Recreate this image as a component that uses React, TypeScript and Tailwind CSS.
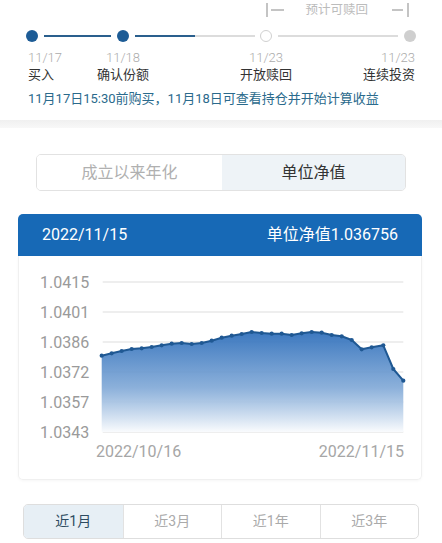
import React from "react";

const pts: [number, number][] = [
  [101.7, 355.7], [111.7, 353.3], [121.7, 351], [131.7, 349], [141.7, 348.3],
  [151.7, 347], [161.7, 345.3], [171.7, 343.7], [181.7, 343], [191.7, 344],
  [201.7, 343], [211.7, 340.7], [221.7, 337.7], [231.7, 335.7], [241.7, 334],
  [251.7, 332], [261.7, 333], [271.7, 333.7], [281.7, 333.7], [291.7, 335],
  [301.7, 333.3], [311.7, 332], [321.7, 332.7], [331.7, 335], [341.7, 336.3],
  [351.7, 340], [361.7, 349.3], [371.7, 347.3], [383.3, 345.3], [393.3, 369],
  [403.3, 380.7],
];

const yLabels = ["1.0415", "1.0401", "1.0386", "1.0372", "1.0357", "1.0343"];

function Chart() {
  const line = pts.map((p, i) => `${i === 0 ? "M" : "L"}${p[0]},${p[1]}`).join(" ");
  const area = `${line} L403.3,432 L101.7,432 Z`;
  return (
    <svg width="404" height="224" viewBox="18 256 404 224" className="block">
      <defs>
        <linearGradient id="ag" x1="0" y1="330" x2="0" y2="434" gradientUnits="userSpaceOnUse">
          <stop offset="0" stopColor="#2f6fbb" stopOpacity="0.95" />
          <stop offset="0.55" stopColor="#7ea7d6" stopOpacity="0.9" />
          <stop offset="1" stopColor="#ffffff" stopOpacity="1" />
        </linearGradient>
      </defs>
      {yLabels.map((l, i) => (
        <g key={l}>
          <line x1="102.7" x2="403.3" y1={282 + 30 * i} y2={282 + 30 * i} stroke="#dedede" strokeWidth="1.2" />
          <text
            x="40"
            y={282 + 30 * i}
            dominantBaseline="central"
            fontSize="16"
            fill="#9a9a9a"
            fontFamily="Roboto, 'Noto Sans', sans-serif"
          >
            {l}
          </text>
        </g>
      ))}
      <path d={area} fill="url(#ag)" />
      <path d={line} fill="none" stroke="#1f5893" strokeWidth="2" strokeLinejoin="round" />
      {pts.map((p, i) => (
        <circle key={i} cx={p[0]} cy={p[1]} r="2.1" fill="#1f5893" />
      ))}
      <text x="96" y="451" dominantBaseline="central" fontSize="16" fill="#a6a6a6" fontFamily="Roboto, 'Noto Sans', sans-serif">
        2022/10/16
      </text>
      <text x="404" y="451" textAnchor="end" dominantBaseline="central" fontSize="16" fill="#a6a6a6" fontFamily="Roboto, 'Noto Sans', sans-serif">
        2022/11/15
      </text>
    </svg>
  );
}

export default function App() {
  return (
    <div className="w-[442px] h-[543px] bg-white overflow-hidden font-['Roboto','Noto_Sans_CJK_SC',sans-serif]">
      {/* bracket row */}
      <div className="h-[20px] flex items-center pl-[266px] text-[#bdbdbd]">
        <div className="w-[1.5px] h-[14px] bg-[#c4c4c4]" />
        <div className="ml-[3px] w-[13px] h-[1.5px] bg-[#c4c4c4]" />
        <div className="ml-[22px] text-[12.5px] leading-[20px] text-[#bcbcbc]">预计可赎回</div>
        <div className="ml-[24px] w-[11px] h-[1.5px] bg-[#c4c4c4]" />
        <div className="ml-[4px] w-[1.5px] h-[14px] bg-[#c4c4c4]" />
      </div>
      {/* dots row */}
      <div className="mt-[10px] h-[12px] flex items-center pl-[26px]">
        <div className="w-[12px] h-[12px] rounded-full bg-[#1d5c96]" />
        <div className="ml-[6px] w-[67px] h-[2.5px] bg-[#2a5f8d]" />
        <div className="ml-[6px] w-[12px] h-[12px] rounded-full bg-[#1d5c96]" />
        <div className="ml-[6px] w-[120px] h-[2.5px] flex">
          <div className="w-[60px] h-full bg-[#2a5f8d]" />
          <div className="flex-1 h-full bg-[#dcdcdc]" />
        </div>
        <div className="ml-[5px] w-[12px] h-[12px] rounded-full border-[1.5px] border-[#d0d0d0] bg-white" />
        <div className="ml-[6px] w-[120px] h-[2px] bg-[#dcdcdc]" />
        <div className="ml-[6px] w-[12px] h-[12px] rounded-full bg-[#cfcfcf]" />
      </div>
      {/* dates + labels */}
      <div className="mt-[6.5px] flex pl-[28px] text-[13px] leading-[17px]">
        <div className="w-[60px] text-left">
          <div className="text-[#ababab] font-light">11/17</div>
          <div className="text-[#333]">买入</div>
        </div>
        <div className="w-[70px] text-center">
          <div className="text-[#ababab] font-light">11/18</div>
          <div className="text-[#333]">确认份额</div>
        </div>
        <div className="w-[58px]" />
        <div className="w-[100px] text-center">
          <div className="text-[#ababab] font-light">11/23</div>
          <div className="text-[#333]">开放赎回</div>
        </div>
        <div className="w-[99px] text-right">
          <div className="text-[#ababab] font-light">11/23</div>
          <div className="text-[#333]">连续投资</div>
        </div>
      </div>
      <div className="mt-[7.5px] pl-[28px] text-[13px] leading-[18px] text-[#2a6a8c]">
        11月17日15:30前购买，11月18日可查看持仓并开始计算收益
      </div>
      {/* gray band */}
      <div className="mt-[12px] h-[8px] bg-gradient-to-b from-[#f0f0f0] to-[#f8f8f8]" />
      {/* toggle */}
      <div className="mt-[26px] mx-[36px] h-[37px] flex rounded-[5px] border border-[#e2e2e2] overflow-hidden text-[16px]">
        <div className="w-[185px] flex items-center justify-center bg-white text-[#b0b0b0]">成立以来年化</div>
        <div className="flex-1 flex items-center justify-center bg-[#eef3f7] text-[#333]">单位净值</div>
      </div>
      {/* chart card */}
      <div className="mt-[23px] mx-[18px] w-[404px]">
        <div className="h-[42px] rounded-t-[5px] bg-[#1769b6] flex items-center justify-between pl-[24px] pr-[24px] text-white text-[16px]">
          <span>2022/11/15</span>
          <span>单位净值1.036756</span>
        </div>
        <div className="h-[224px] rounded-b-[5px] border border-t-0 border-[#f0f0f0] shadow-[0_1px_3px_rgba(0,0,0,0.04)] overflow-hidden">
          <div className="-ml-px">
            <Chart />
          </div>
        </div>
      </div>
      {/* period tabs */}
      <div className="mt-[24px] mx-[23px] h-[35px] grid grid-cols-4 rounded-[5px] border border-[#dedede] overflow-hidden text-[14px]">
        <div className="flex items-center justify-center bg-[#e7eff5] text-[#2d4b60]">近1月</div>
        <div className="flex items-center justify-center border-l border-[#e2e2e2] text-[#aaaaaa]">近3月</div>
        <div className="flex items-center justify-center border-l border-[#e2e2e2] text-[#aaaaaa]">近1年</div>
        <div className="flex items-center justify-center border-l border-[#e2e2e2] text-[#aaaaaa]">近3年</div>
      </div>
    </div>
  );
}
